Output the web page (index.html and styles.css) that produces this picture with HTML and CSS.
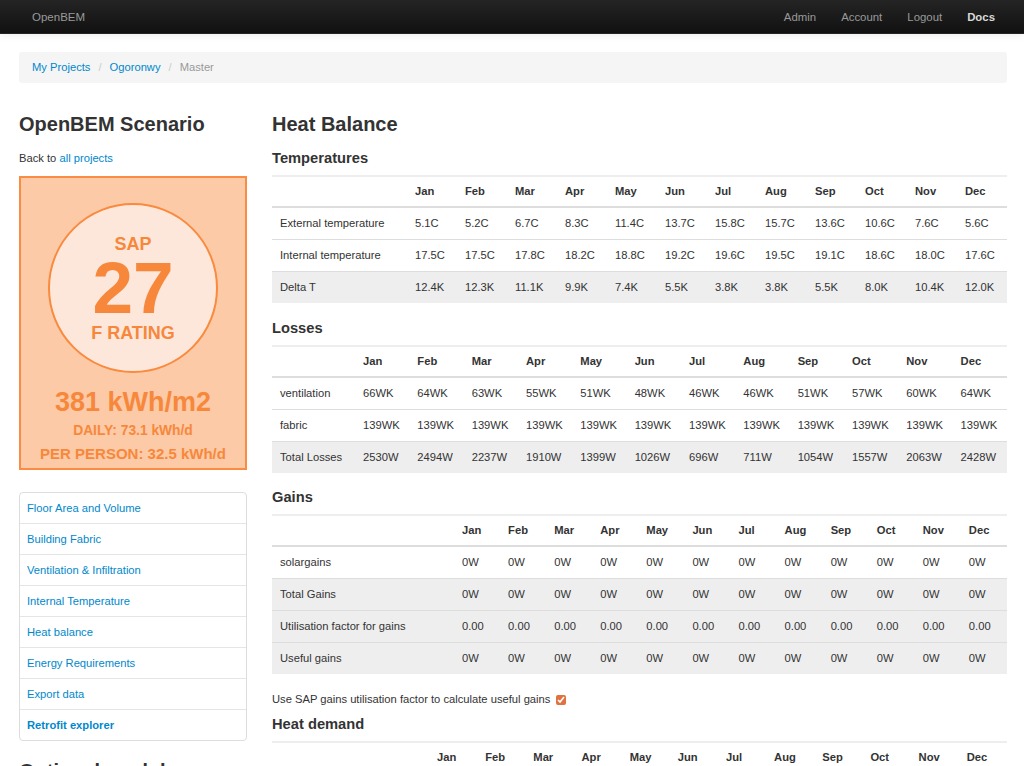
FILE: index.html
```html
<!DOCTYPE html>
<html lang="en">
<head>
<meta charset="utf-8">
<title>OpenBEM</title>
<link rel="stylesheet" href="styles.css">
</head>
<body>
<header class="navbar">
  <a class="brand" href="#">OpenBEM</a>
  <nav class="nav-right">
    <a href="#">Admin</a>
    <a href="#">Account</a>
    <a href="#">Logout</a>
    <a href="#" class="docs">Docs</a>
  </nav>
</header>

<div class="container">
  <ul class="breadcrumb">
    <li><a href="#">My Projects</a><span class="divider">/</span></li>
    <li><a href="#">Ogoronwy</a><span class="divider">/</span></li>
    <li class="active">Master</li>
  </ul>

  <div class="row">
    <aside class="sidebar">
      <h3 class="title">OpenBEM Scenario</h3>
      <p class="back">Back to <a href="#">all projects</a></p>

      <div class="sap-box">
        <div class="sap-circle">
          <div class="sap-label">SAP</div>
          <div class="sap-value">27</div>
          <div class="sap-rating">F RATING</div>
        </div>
        <div class="sap-kwh">381 kWh/m2</div>
        <div class="sap-daily">DAILY: 73.1 kWh/d</div>
        <div class="sap-person">PER PERSON: 32.5 kWh/d</div>
      </div>

      <ul class="side-nav">
        <li><a href="#">Floor Area and Volume</a></li>
        <li><a href="#">Building Fabric</a></li>
        <li><a href="#">Ventilation &amp; Infiltration</a></li>
        <li><a href="#">Internal Temperature</a></li>
        <li><a href="#">Heat balance</a></li>
        <li><a href="#">Energy Requirements</a></li>
        <li><a href="#">Export data</a></li>
        <li><a href="#" class="strong">Retrofit explorer</a></li>
      </ul>

      <h3 class="title optional">Optional modules</h3>
    </aside>

    <main class="main">
      <h3 class="title">Heat Balance</h3>

      <h4>Temperatures</h4>
      <table class="data t-temp">
        <colgroup><col class="label-col"><col span="12"></colgroup>
        <tr class="head"><th></th><th>Jan</th><th>Feb</th><th>Mar</th><th>Apr</th><th>May</th><th>Jun</th><th>Jul</th><th>Aug</th><th>Sep</th><th>Oct</th><th>Nov</th><th>Dec</th></tr>
        <tr><td>External temperature</td><td>5.1C</td><td>5.2C</td><td>6.7C</td><td>8.3C</td><td>11.4C</td><td>13.7C</td><td>15.8C</td><td>15.7C</td><td>13.6C</td><td>10.6C</td><td>7.6C</td><td>5.6C</td></tr>
        <tr><td>Internal temperature</td><td>17.5C</td><td>17.5C</td><td>17.8C</td><td>18.2C</td><td>18.8C</td><td>19.2C</td><td>19.6C</td><td>19.5C</td><td>19.1C</td><td>18.6C</td><td>18.0C</td><td>17.6C</td></tr>
        <tr class="shade"><td>Delta T</td><td>12.4K</td><td>12.3K</td><td>11.1K</td><td>9.9K</td><td>7.4K</td><td>5.5K</td><td>3.8K</td><td>3.8K</td><td>5.5K</td><td>8.0K</td><td>10.4K</td><td>12.0K</td></tr>
      </table>

      <h4>Losses</h4>
      <table class="data t-loss">
        <colgroup><col class="label-col"><col span="12"></colgroup>
        <tr class="head"><th></th><th>Jan</th><th>Feb</th><th>Mar</th><th>Apr</th><th>May</th><th>Jun</th><th>Jul</th><th>Aug</th><th>Sep</th><th>Oct</th><th>Nov</th><th>Dec</th></tr>
        <tr><td>ventilation</td><td>66WK</td><td>64WK</td><td>63WK</td><td>55WK</td><td>51WK</td><td>48WK</td><td>46WK</td><td>46WK</td><td>51WK</td><td>57WK</td><td>60WK</td><td>64WK</td></tr>
        <tr><td>fabric</td><td>139WK</td><td>139WK</td><td>139WK</td><td>139WK</td><td>139WK</td><td>139WK</td><td>139WK</td><td>139WK</td><td>139WK</td><td>139WK</td><td>139WK</td><td>139WK</td></tr>
        <tr class="shade"><td>Total Losses</td><td>2530W</td><td>2494W</td><td>2237W</td><td>1910W</td><td>1399W</td><td>1026W</td><td>696W</td><td>711W</td><td>1054W</td><td>1557W</td><td>2063W</td><td>2428W</td></tr>
      </table>

      <h4>Gains</h4>
      <table class="data t-gain">
        <colgroup><col class="label-col"><col span="12"></colgroup>
        <tr class="head"><th></th><th>Jan</th><th>Feb</th><th>Mar</th><th>Apr</th><th>May</th><th>Jun</th><th>Jul</th><th>Aug</th><th>Sep</th><th>Oct</th><th>Nov</th><th>Dec</th></tr>
        <tr><td>solargains</td><td>0W</td><td>0W</td><td>0W</td><td>0W</td><td>0W</td><td>0W</td><td>0W</td><td>0W</td><td>0W</td><td>0W</td><td>0W</td><td>0W</td></tr>
        <tr class="shade"><td>Total Gains</td><td>0W</td><td>0W</td><td>0W</td><td>0W</td><td>0W</td><td>0W</td><td>0W</td><td>0W</td><td>0W</td><td>0W</td><td>0W</td><td>0W</td></tr>
        <tr class="shade"><td>Utilisation factor for gains</td><td>0.00</td><td>0.00</td><td>0.00</td><td>0.00</td><td>0.00</td><td>0.00</td><td>0.00</td><td>0.00</td><td>0.00</td><td>0.00</td><td>0.00</td><td>0.00</td></tr>
        <tr class="shade"><td>Useful gains</td><td>0W</td><td>0W</td><td>0W</td><td>0W</td><td>0W</td><td>0W</td><td>0W</td><td>0W</td><td>0W</td><td>0W</td><td>0W</td><td>0W</td></tr>
      </table>

      <p class="check-line">Use SAP gains utilisation factor to calculate useful gains <input type="checkbox" class="check" checked></p>

      <h4>Heat demand</h4>
      <table class="data t-demand">
        <colgroup><col class="label-col"><col span="12"></colgroup>
        <tr class="head"><th></th><th>Jan</th><th>Feb</th><th>Mar</th><th>Apr</th><th>May</th><th>Jun</th><th>Jul</th><th>Aug</th><th>Sep</th><th>Oct</th><th>Nov</th><th>Dec</th></tr>
      </table>
    </main>
  </div>
</div>
</body>
</html>
```

FILE: styles.css
```css
* { box-sizing: border-box; }

html, body {
  margin: 0;
  padding: 0;
  background: #fff;
}

body {
  font-family: "Liberation Sans", Arial, Helvetica, sans-serif;
  font-size: 11.2px;
  line-height: 16px;
  color: #333;
}

a {
  color: #0088cc;
  text-decoration: none;
}

/* Navbar */
.navbar {
  height: 34px;
  background: linear-gradient(#242424, #111111);
  border-bottom: 1px solid #252525;
  display: flex;
  align-items: center;
  justify-content: space-between;
  padding: 0 17px 0 32px;
  box-shadow: 0 1px 8px rgba(0, 0, 0, 0.08);
}

.brand {
  color: #999;
  font-size: 11.5px;
}

.nav-right {
  display: flex;
}

.nav-right a {
  color: #999;
  font-size: 11.4px;
  padding: 0 12.5px;
}

.nav-right a.docs {
  color: #d9d9d9;
  font-weight: bold;
  padding-right: 12px;
}

/* Container */
.container {
  padding: 18px 17px 0 19px;
}

.breadcrumb {
  list-style: none;
  margin: 0 0 16px;
  padding: 7px 13px 8px;
  background: #f5f5f5;
  border-radius: 3px;
  display: flex;
  line-height: 16px;
}

.breadcrumb .divider {
  color: #ccc;
  padding: 0 8px;
}

.breadcrumb .active {
  color: #999;
}

.row {
  display: flex;
  gap: 25px;
}

.sidebar {
  width: 228px;
  flex: none;
}

.main {
  flex: 1;
  min-width: 0;
}

h3.title {
  font-size: 20px;
  line-height: 32px;
  margin: 9px 0 10px;
  font-weight: bold;
  color: #333;
}

h3.title.optional {
  margin-top: 14px;
}

.back {
  margin: 0 0 10px;
}

/* SAP box */
.sap-box {
  height: 294px;
  background: #fccaa7;
  border: 2px solid #fa8c43;
  padding-top: 25px;
  color: #f7883b;
  font-weight: bold;
  text-align: center;
}

.sap-circle {
  width: 170px;
  height: 170px;
  margin: 0 auto;
  border: 2px solid #f98a3e;
  border-radius: 50%;
  background: #fde7db;
  padding-top: 31px;
}

.sap-label {
  font-size: 18px;
  line-height: 16px;
}

.sap-value {
  font-size: 73px;
  line-height: 72px;
}

.sap-rating {
  font-size: 18px;
  line-height: 18px;
}

.sap-kwh {
  margin-top: 14px;
  font-size: 27px;
  line-height: 30px;
}

.sap-daily {
  margin-top: 2px;
  font-size: 13.8px;
  line-height: 24px;
}

.sap-person {
  font-size: 15px;
  line-height: 22px;
}

/* Side nav */
.side-nav {
  list-style: none;
  margin: 22px 0 0;
  padding: 0;
  border: 1px solid #dddddd;
  border-radius: 4px;
}

.side-nav li + li {
  border-top: 1px solid #e5e5e5;
}

.side-nav a {
  display: block;
  padding: 7px 7px;
  line-height: 16px;
}

.side-nav a.strong {
  font-weight: bold;
}

/* Main content */
h4 {
  font-size: 14.7px;
  line-height: 16px;
  margin: 8px 0 9px;
  font-weight: bold;
  color: #333;
}

h3.title + h4 {
  margin-top: 0;
}

.data {
  width: 100%;
  border-collapse: collapse;
  table-layout: fixed;
  margin-bottom: 17px;
}

.data.t-loss {
  margin-bottom: 16px;
}

.data th,
.data td {
  text-align: left;
  padding: 7px 8px 8px;
  line-height: 16px;
  border-top: 1px solid #dddddd;
  white-space: nowrap;
  overflow: hidden;
}

.data tr.head th {
  border-top: 2px solid #eeeeee;
  border-bottom: 2px solid #dddddd;
  padding: 6px 8px 7px;
  font-weight: bold;
}

.data tr.head + tr td {
  border-top: 0;
}

.data tr.shade td {
  background: #eeeeee;
}

.t-temp .label-col { width: 135px; }
.t-loss .label-col { width: 83px; }
.t-gain .label-col { width: 182px; }
.t-demand .label-col { width: 157px; }

.check-line {
  margin: 0 0 9px;
}

.check {
  width: 10px;
  height: 10px;
  margin: 0 0 0 2px;
  vertical-align: -2px;
  accent-color: #e0723f;
}
```
